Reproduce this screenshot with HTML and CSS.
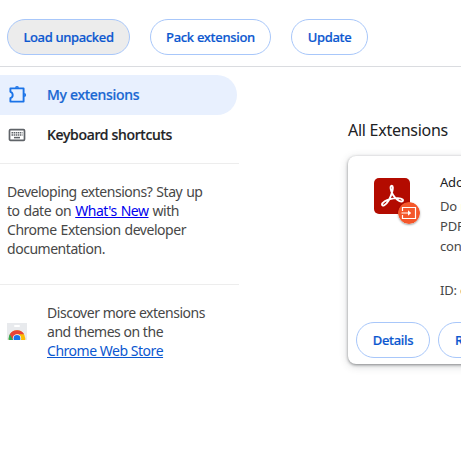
FILE: index.html
```html
<!DOCTYPE html>
<html lang="en">
<head>
<meta charset="utf-8">
<title>Extensions</title>
<link rel="stylesheet" href="styles.css">
</head>
<body>
<header class="toolbar">
  <button class="btn load active">Load unpacked</button>
  <button class="btn pack">Pack extension</button>
  <button class="btn update">Update</button>
</header>
<div class="page">
  <aside class="sidebar">
    <nav>
      <a class="item selected">
        <svg width="20" height="20" viewBox="0 0 20 20" fill="none" stroke="#1a73e8" stroke-width="1.900" stroke-linejoin="round"><path d="M3.400 3.400h13.200v13.200H3.400v-3.400c1.500-.5 2.300-1.600 2.300-3.200s-.8-2.700-2.300-3.200z"/><path d="M8 2.800a2 1.900 0 0 1 4 0zM17.200 8a1.900 2 0 0 1 0 4z" fill="#1a73e8" stroke="none"/></svg>
        <span>My extensions</span>
      </a>
      <a class="item">
        <svg width="20" height="20" viewBox="0 0 20 20" fill="none" stroke="#5f6368"><rect x="2.500" y="4.700" width="15" height="10.600" rx="1" stroke-width="1.700"/><path d="M4.500 7.700h11M4.500 9.900h11" stroke-width="1.500" stroke-dasharray="1.500 .6"/><path d="M7 12.600h6" stroke-width="1.500"/></svg>
        <span>Keyboard shortcuts</span>
      </a>
    </nav>
    <p class="note">Developing extensions? Stay up<br>to date on <a class="news" href="#">What's New</a> with<br>Chrome Extension developer<br>documentation.</p>
    <div class="promo">
      <svg width="20" height="20" viewBox="0 0 20 20"><defs><clipPath id="bag"><path d="M0 1h20v17H0z"/></clipPath></defs><path fill="#e8eaed" d="M0 1h20v17H0z"/><rect x="7" y="3" width="6" height="2" rx="1" fill="#fff"/><g clip-path="url(#bag)"><circle cx="10" cy="16.500" r="8.300" fill="#fbbc04"/><path d="M10 16.500 2.800 12.300A8.300 8.300 0 0 0 5.800 23.700z" fill="#34a853"/><path d="M2.800 12.300A8.300 8.300 0 0 1 17.200 12.300H10L6.400 18.500z" fill="#ea4335"/><circle cx="10" cy="16.500" r="4.200" fill="#fff"/><circle cx="10" cy="16.500" r="3.400" fill="#1a73e8"/></g></svg>
      <p>Discover more extensions<br>and themes on the<br><a href="#">Chrome Web Store</a></p>
    </div>
  </aside>
  <main class="content">
    <h2>All Extensions</h2>
    <article class="card">
      <div class="info">
        <div class="logo">
          <svg width="36" height="36" viewBox="0 0 36 36"><rect width="36" height="36" rx="5" fill="#b30b00"/><path d="M17.800 7.700c-2.200 0-1.200 5.500 1.300 9.400 2.300 3.700 6.200 6.700 8.500 6.400 3.100-.5 1-3.700-4.600-3.400-5.300.3-9.500 1.500-12.300 3.200-4 2.500-3 5.500-.4 3.900 3.500-2.200 6.500-8.500 7.900-13.500.9-3.400 1-6-.4-6z" fill="none" stroke="#fff" stroke-width="1.900"/></svg>
          <svg class="badge" width="22" height="22" viewBox="0 0 22 22"><circle cx="11" cy="11" r="11" fill="#f4572b"/><path d="M4.500 9V5.500h13v11h-13V13M3.500 11H12" fill="none" stroke="#fff" stroke-width="1.200"/><path d="m10 8.300 3.200 2.700-3.200 2.700z" fill="#fff"/></svg>
        </div>
        <div class="text">
          <div class="name">Adobe</div>
          <div>Do more</div>
          <div>PDFs</div>
          <div>convert</div>
          <div class="id">ID: efaid</div>
        </div>
      </div>
      <div class="actions"><button class="btn details">Details</button><button class="btn remove">Remove</button></div>
    </article>
  </main>
</div>
</body>
</html>
```
FILE: styles.css
```css
* { box-sizing: border-box; }
body { margin: 0; height: 458px; overflow: hidden; background: #fff; color: #474747; font: 14px/19px "Noto Sans", sans-serif; }
p, h2 { margin: 0; white-space: nowrap; }
.toolbar { display: flex; gap: 20px; height: 67px; padding: 19px 0 0 7px; border-bottom: 1px solid #dadce0; }
.btn { flex: none; height: 36px; padding: 0; border: 1px solid #a8c7fa; border-radius: 18px; background: #fff; color: #0b57d0; font: 500 13px "Noto Sans", sans-serif; letter-spacing: -.35px; -webkit-text-stroke: .2px; white-space: nowrap; }
.load { width: 123px; }
.pack { width: 121px; letter-spacing: -.3px; }
.update { width: 77px; }
.active { background: #ececec; }
.page { display: flex; height: 391px; }
.sidebar { width: 239px; flex: none; padding-top: 8px; }
nav { height: 89px; border-bottom: 1px solid #ededed; }
.item { display: flex; align-items: center; width: 237px; height: 40px; padding-left: 7px; gap: 20px; border-radius: 0 20px 20px 0; color: #202124; font-weight: 500; letter-spacing: -.3px; -webkit-text-stroke: .2px; white-space: nowrap; }
.item span { padding-bottom: 2px; }
.item svg { margin-bottom: 1px; }
.selected { background: #e8f0fe; color: #1967d2; }
.note { height: 121px; padding: 18px 0 0 7px; border-bottom: 1px solid #ededed; letter-spacing: -.47px; word-spacing: .8px; }
.news { color: #0000ee; }
.promo { display: flex; align-items: center; gap: 20px; padding: 18px 0 0 7px; letter-spacing: -.47px; }
.promo a { color: #0b57d0; }
.content { flex: 1; min-width: 0; overflow: hidden; padding: 52px 0 0 109px; }
h2 { height: 37px; color: #202124; font-size: 16px; font-weight: 400; line-height: 22px; letter-spacing: -.27px; }
.card { width: 400px; height: 208px; padding: 16px 8px 6px; border-radius: 8px; background: #fff; box-shadow: 0 1px 3px rgba(60,64,67,.55), 0 2px 8px rgba(60,64,67,.22); }
.info { display: flex; height: 150px; padding-left: 18px; }
.logo { position: relative; flex: none; width: 66px; padding-top: 6px; }
.badge { position: absolute; left: 24px; top: 30px; border-radius: 50%; box-shadow: 0 1px 2px rgba(0,0,0,.35); }
.text { font-size: 13px; line-height: 20px; letter-spacing: -.2px; white-space: nowrap; }
.name { height: 24px; color: #202124; line-height: 21px; }
.id { margin-top: 24px; }
.actions { display: flex; gap: 8px; }
.details { width: 74px; }
.remove { width: 82px; }
```
